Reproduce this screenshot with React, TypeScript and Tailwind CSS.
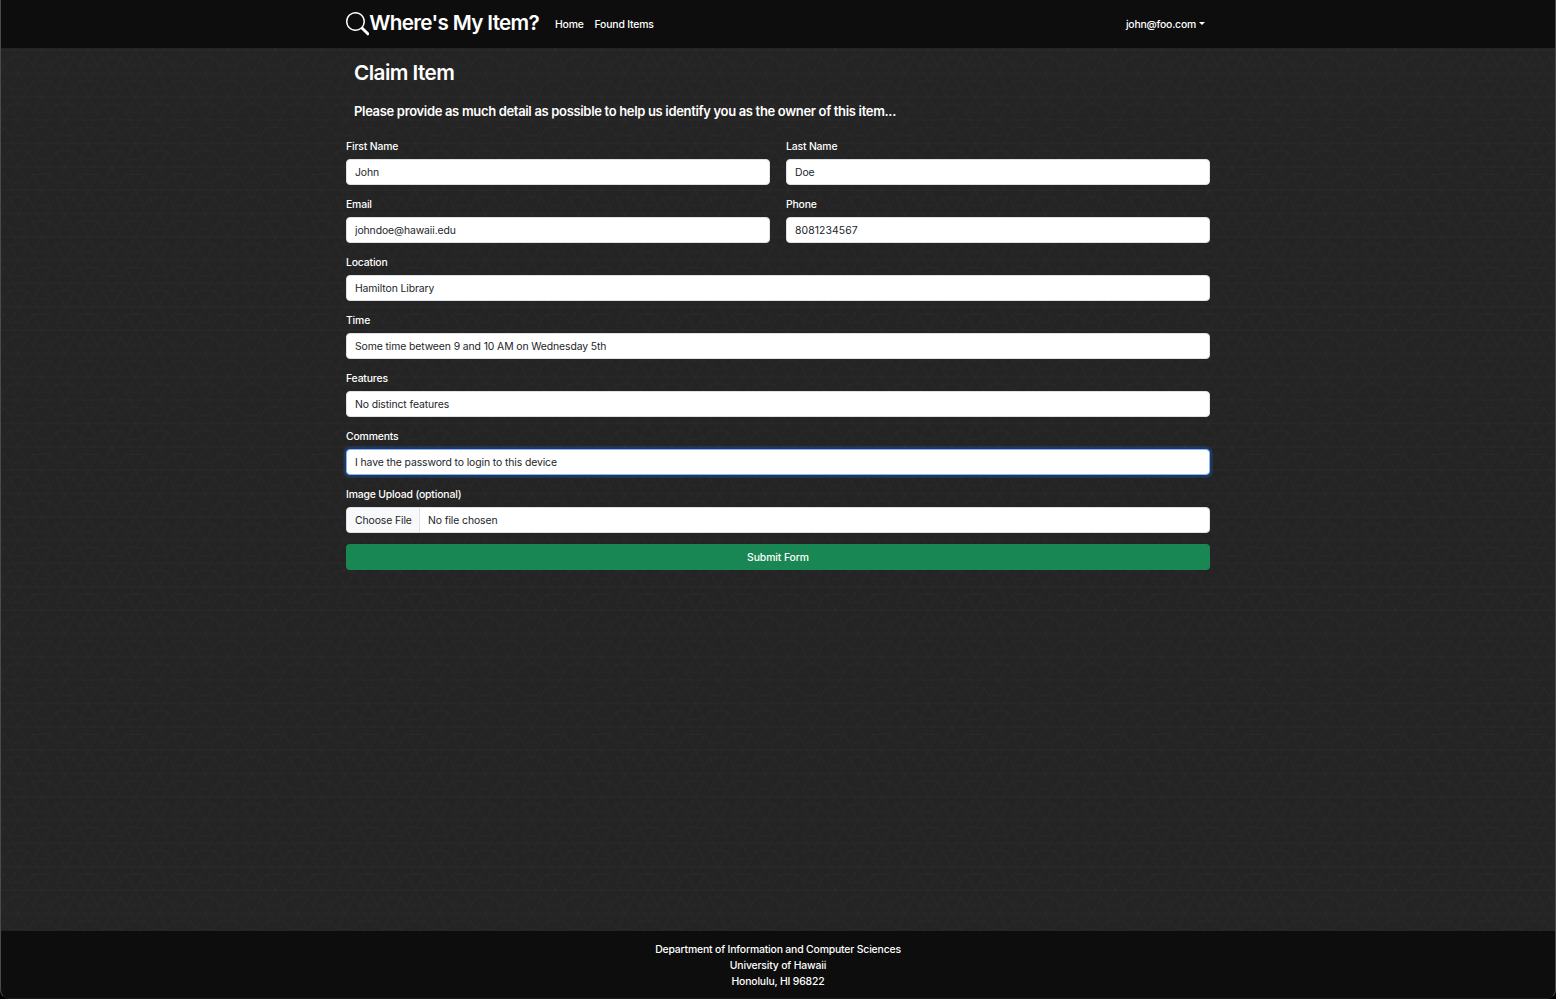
import React from "react";

const crossings = [
  [11.667, 11.667],
  [58.333, 11.667],
  [-11.667, 35],
  [35, 35],
  [11.667, 58.333],
  [58.333, 58.333],
  [35, -11.667],
  [-11.667, -11.667],
];

function TrianglePattern() {
  return (
    <svg className="absolute inset-0 h-full w-full" aria-hidden="true">
      <defs>
        <pattern id="triangles" x="6.93" y="13.73" width="46.667" height="46.667" patternUnits="userSpaceOnUse">
          <g fill="none" stroke="#2b2b2b" strokeWidth="0.7">
            <path d="M0 11.667H46.7M0 35H46.7" />
            {crossings.map(([x, y]) => (
              <path
                key={`${x},${y}`}
                transform={`translate(${x} ${y})`}
                d="M-9.3-15.7H9.3M-9.3-15.7 9 15.7M9.3-15.7-9 15.7M9.3-15.7 22.5 7M-9.3-15.7-22.5 7M-6.5 15.7H6.5"
              />
            ))}
          </g>
        </pattern>
      </defs>
      <rect width="100%" height="100%" fill="url(#triangles)" />
    </svg>
  );
}

const labelClass = "block h-[21px] pt-px text-[10.4px] leading-4 font-medium tracking-[-0.16px] text-white";
const boxClass =
  "block h-[26px] w-full rounded-[4px] border bg-white px-2 text-[10.4px] leading-4 text-[#212529] outline-none";

type FieldProps = { label: string; value: string; focused?: boolean; numeric?: boolean };

function Field({ label, value, focused = false, numeric = false }: FieldProps) {
  return (
    <label className="block min-w-0 flex-1">
      <span className={labelClass}>{label}</span>
      <input
        defaultValue={value}
        className={`${boxClass} ${numeric ? "tracking-[0.1px]" : "tracking-[-0.1px]"} ${
          focused ? "border-[#86b7fe] shadow-[0_0_0_2.67px_rgba(13,110,253,0.25)]" : "border-[#dee2e6]"
        }`}
      />
    </label>
  );
}

export default function App() {
  return (
    <div className="relative flex h-[999px] flex-col overflow-hidden bg-[#242424] font-['Inter',sans-serif] text-white">
      <header className="flex h-12 shrink-0 justify-center bg-[#0d0d0d]">
        <nav className="flex w-[864px] items-center text-[10.4px] leading-4 font-medium tracking-[-0.16px]">
          <a className="flex w-[193px] items-center text-[20.7px] leading-6 font-semibold tracking-[-0.68px] whitespace-nowrap">
            <svg className="h-[23.3px] w-[23.3px] shrink-0" viewBox="0 0 16 16" fill="currentColor">
              <path d="M11.742 10.344a6.5 6.5 0 1 0-1.397 1.398h-.001q.044.06.098.115l3.85 3.85a1 1 0 0 0 1.415-1.414l-3.85-3.85a1 1 0 0 0-.115-.1zM12 6.5a5.5 5.5 0 1 1-11 0 5.5 5.5 0 0 1 11 0" />
            </svg>
            <span className="mb-0.5">Where's My Item?</span>
          </a>
          <a className="ml-4 w-[29px] pt-px">Home</a>
          <a className="ml-[10.5px] pt-px">Found Items</a>
          <a className="mr-[5px] ml-auto flex items-center pt-px tracking-[-0.2px]">
            john@foo.com
            <span className="mb-[3px] ml-[3px] border-x-[3px] border-t-[3px] border-x-transparent border-t-white" />
          </a>
        </nav>
      </header>

      <main className="relative flex flex-1 justify-center">
        <TrianglePattern />
        <div className="relative w-[864px]">
          <h1 className="ml-2 pt-3 text-[20.7px] leading-[26px] font-semibold tracking-[-0.55px]">Claim Item</h1>
          <p className="mt-[15px] ml-2 text-[13px] leading-5 font-semibold tracking-[-0.33px]">
            Please provide as much detail as possible to help us identify you as the owner of this item...
          </p>
          <form className="mt-[17px] flex flex-col gap-[11px]">
            <div className="flex gap-4">
              <Field label="First Name" value="John" />
              <Field label="Last Name" value="Doe" />
            </div>
            <div className="flex gap-4">
              <Field label="Email" value="johndoe@hawaii.edu" />
              <Field label="Phone" value="8081234567" numeric />
            </div>
            <Field label="Location" value="Hamilton Library" />
            <Field label="Time" value="Some time between 9 and 10 AM on Wednesday 5th" />
            <Field label="Features" value="No distinct features" />
            <Field label="Comments" value="I have the password to login to this device" focused />
            <div>
              <span className={labelClass}>Image Upload (optional)</span>
              <div className="flex h-[26px] items-center overflow-hidden rounded-[4px] border border-[#dee2e6] bg-white text-[10.4px] leading-4 tracking-[-0.1px] text-[#212529]">
                <span className="flex h-full w-[73px] items-center border-r border-[#dee2e6] bg-[#f8f9fa] pt-px pl-2 whitespace-nowrap">
                  Choose File
                </span>
                <span className="ml-2 pt-px">No file chosen</span>
              </div>
            </div>
            <button
              type="button"
              className="h-[26px] rounded-[4px] bg-[#198754] pt-px text-[10.4px] leading-4 font-medium tracking-[-0.1px]"
            >
              Submit Form
            </button>
          </form>
        </div>
      </main>

      <footer className="h-[68px] shrink-0 bg-[#0d0d0d] pt-[11px] text-center text-[10.4px] leading-4 font-medium tracking-[-0.16px]">
        <p>Department of Information and Computer Sciences</p>
        <p>University of Hawaii</p>
        <p>Honolulu, HI 96822</p>
      </footer>

      <div className="pointer-events-none absolute inset-0 rounded-b-[9px] border-x border-b border-x-[#4a4a4a] border-b-[#1c1c1c] shadow-[0_0_0_12px_#000]" />
    </div>
  );
}
